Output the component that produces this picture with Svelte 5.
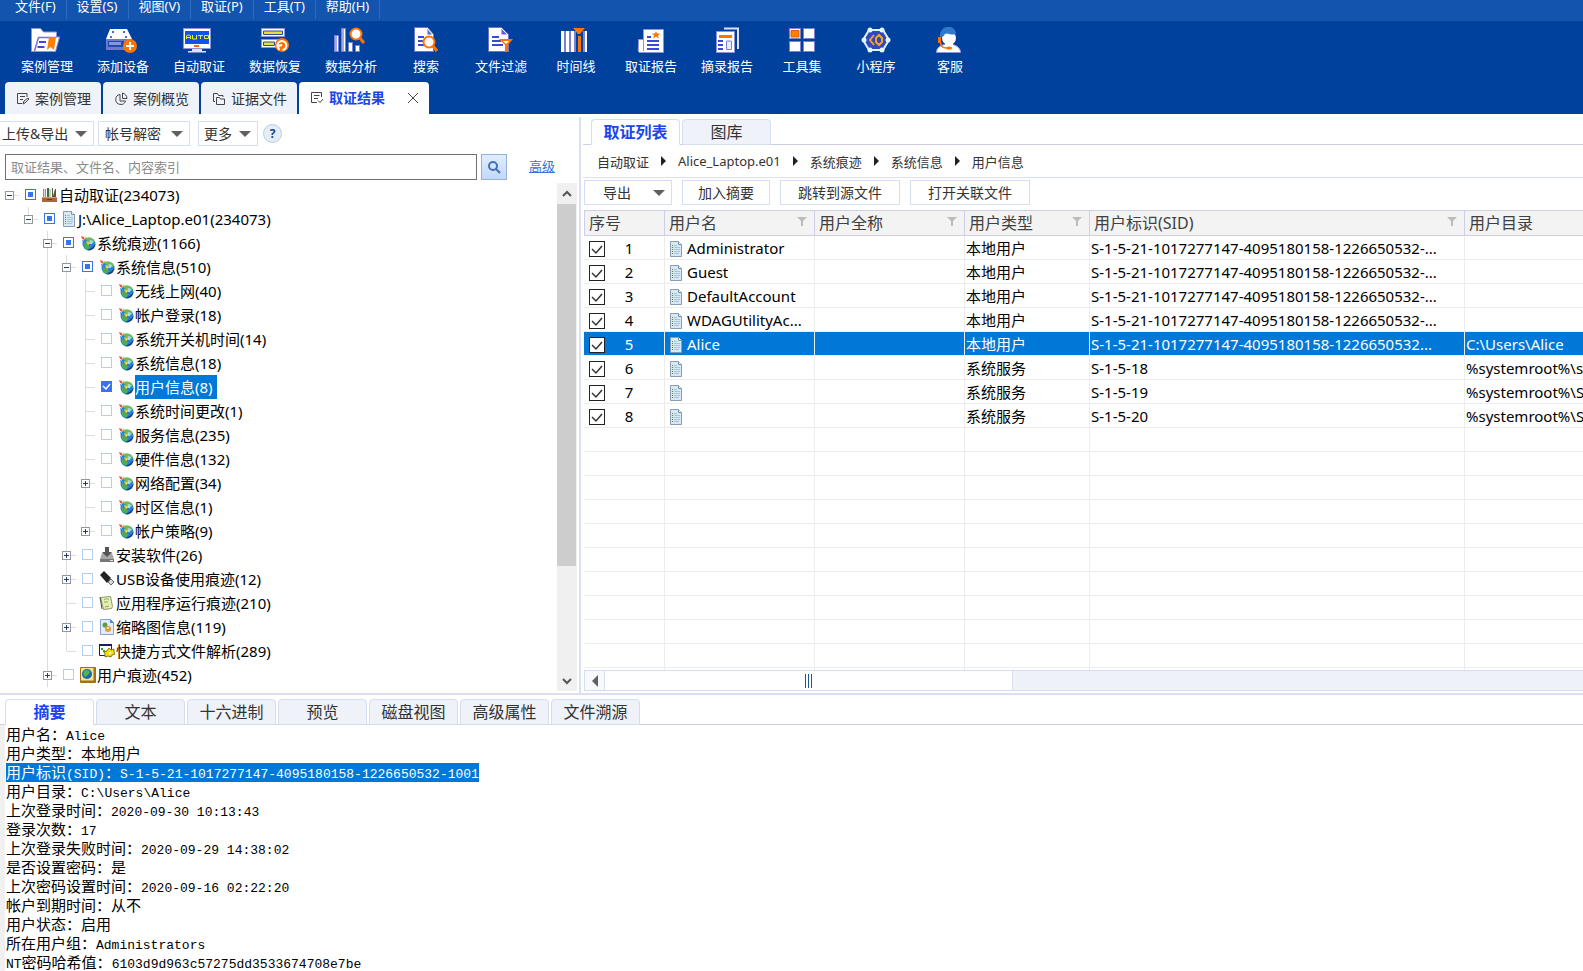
<script lang="ts">
  interface TreeNode {
    level: number;
    icon: string;
    name: string;
    count: number;
    expand?: '+' | '-';
    check?: 'partial' | 'on';
    // vertical guides: levels that carry on below this row
    lines: number[];
    last?: boolean;
  }

  const menus = ['文件(F)', '设置(S)', '视图(V)', '取证(P)', '工具(T)', '帮助(H)'];

  const tools = [
    { name: '案例管理', icon: 'caseFolder' },
    { name: '添加设备', icon: 'addDevice' },
    { name: '自动取证', icon: 'auto' },
    { name: '数据恢复', icon: 'recover' },
    { name: '数据分析', icon: 'analyse' },
    { name: '搜索', icon: 'search' },
    { name: '文件过滤', icon: 'filter' },
    { name: '时间线', icon: 'timeline' },
    { name: '取证报告', icon: 'report' },
    { name: '摘录报告', icon: 'excerpt' },
    { name: '工具集', icon: 'toolset' },
    { name: '小程序', icon: 'applet' },
    { name: '客服', icon: 'support' }
  ];

  const pages = [
    { name: '案例管理', icon: 'edit' },
    { name: '案例概览', icon: 'pie' },
    { name: '证据文件', icon: 'folders' },
    { name: '取证结果', icon: 'result' }
  ];

  const nodes: TreeNode[] = [
    { level: 0, icon: 'books', name: '自动取证', count: 234073, expand: '-', check: 'partial', lines: [] },
    { level: 1, icon: 'doc', name: 'J:\\Alice_Laptop.e01', count: 234073, expand: '-', check: 'partial', lines: [], last: true },
    { level: 2, icon: 'globe', name: '系统痕迹', count: 1166, expand: '-', check: 'partial', lines: [] },
    { level: 3, icon: 'globe', name: '系统信息', count: 510, expand: '-', check: 'partial', lines: [2] },
    { level: 4, icon: 'globe', name: '无线上网', count: 40, lines: [2, 3] },
    { level: 4, icon: 'globe', name: '帐户登录', count: 18, lines: [2, 3] },
    { level: 4, icon: 'globe', name: '系统开关机时间', count: 14, lines: [2, 3] },
    { level: 4, icon: 'globe', name: '系统信息', count: 18, lines: [2, 3] },
    { level: 4, icon: 'globe', name: '用户信息', count: 8, check: 'on', lines: [2, 3] },
    { level: 4, icon: 'globe', name: '系统时间更改', count: 1, lines: [2, 3] },
    { level: 4, icon: 'globe', name: '服务信息', count: 235, lines: [2, 3] },
    { level: 4, icon: 'globe', name: '硬件信息', count: 132, lines: [2, 3] },
    { level: 4, icon: 'globe', name: '网络配置', count: 34, expand: '+', lines: [2, 3] },
    { level: 4, icon: 'globe', name: '时区信息', count: 1, lines: [2, 3] },
    { level: 4, icon: 'globe', name: '帐户策略', count: 9, expand: '+', lines: [2, 3], last: true },
    { level: 3, icon: 'install', name: '安装软件', count: 26, expand: '+', lines: [2] },
    { level: 3, icon: 'usb', name: 'USB设备使用痕迹', count: 12, expand: '+', lines: [2] },
    { level: 3, icon: 'app', name: '应用程序运行痕迹', count: 210, lines: [2] },
    { level: 3, icon: 'thumb', name: '缩略图信息', count: 119, expand: '+', lines: [2] },
    { level: 3, icon: 'shortcut', name: '快捷方式文件解析', count: 289, lines: [2], last: true },
    { level: 2, icon: 'world', name: '用户痕迹', count: 452, expand: '+', lines: [] }
  ];

  const crumbs = ['自动取证', 'Alice_Laptop.e01', '系统痕迹', '系统信息', '用户信息'];
  const columns = ['用户名', '用户全称', '用户类型', '用户标识(SID)', '用户目录'];
  const SID = 'S-1-5-21-1017277147-4095180158-1226650532';

  const users = [
    { name: 'Administrator', type: '本地用户', sid: SID + '-...', dir: '' },
    { name: 'Guest', type: '本地用户', sid: SID + '-...', dir: '' },
    { name: 'DefaultAccount', type: '本地用户', sid: SID + '-...', dir: '' },
    { name: 'WDAGUtilityAc...', type: '本地用户', sid: SID + '-...', dir: '' },
    { name: 'Alice', type: '本地用户', sid: SID + '...', dir: 'C:\\Users\\Alice' },
    { name: '', type: '系统服务', sid: 'S-1-5-18', dir: '%systemroot%\\system32' },
    { name: '', type: '系统服务', sid: 'S-1-5-19', dir: '%systemroot%\\ServiceProfiles' },
    { name: '', type: '系统服务', sid: 'S-1-5-20', dir: '%systemroot%\\ServiceProfiles' }
  ];
  const emptyRows = Array(11);

  const detailTabs = ['摘要', '文本', '十六进制', '预览', '磁盘视图', '高级属性', '文件溯源'];
  const details = [
    '用户名：Alice',
    '用户类型：本地用户',
    '用户标识(SID)：S-1-5-21-1017277147-4095180158-1226650532-1001',
    '用户目录：C:\\Users\\Alice',
    '上次登录时间：2020-09-30 10:13:43',
    '登录次数：17',
    '上次登录失败时间：2020-09-29 14:38:02',
    '是否设置密码：是',
    '上次密码设置时间：2020-09-16 02:22:20',
    '帐户到期时间：从不',
    '用户状态：启用',
    '所在用户组：Administrators',
    'NT密码哈希值：6103d9d963c57275dd3533674708e7be'
  ];

  let activePage = $state('取证结果');
  let activeNode = $state(8);
  let activeUser = $state(4);
  let activeDetail = $state('摘要');
  let activeList = $state('取证列表');
  let query = $state('');

  // latin runs get the monospace face, the rest stays CJK
  function runs(text: string) {
    return text.split(/([\x20-\x7e]+)/).filter(Boolean);
  }

  const icons: Record<string, string> = {
    // --- toolbar, 34x26 ---
    caseFolder: `<path d="M1.500 24.500V1.500h9l3 3.500h13v5h3l-4 14.500z" fill="#fff" stroke="#8f94d8"/><path d="M4.500 24L8.500 10.500h18" fill="none" stroke="#6f76cf" stroke-width="1.500"/><path d="M9 15h7M7.500 20h7" stroke="#3b49d0" stroke-width="2"/><path d="M19 10h7l-2 13-3.500-3-3.500 3z" fill="#ff8000"/>`,
    addDevice: `<path d="M4 2h17l5 10H0z" fill="#fff"/><path d="M0 12h26v11H0z" fill="#6f79cb"/><path d="M2 14h16v6H2z" fill="#1c4cae"/><path d="M3 15h12v3H3z" fill="#8b93dc"/><path d="M6 4h2v2H6zM17 4h2v2h-2zM4 9h2v2H4zM19 9h2v2h-2z" fill="#5c65c8"/><circle cx="24" cy="19" r="7" fill="#ff7300"/><path d="M24 15v8M20 19h8" stroke="#fff" stroke-width="2"/>`,
    auto: `<path d="M1.500 1.500h27v20h-27z" fill="#fff" stroke="#8f94d8"/><path d="M3 4h24v13H3z" fill="#1351e8"/><path d="M4.500 12V9l1-1h2l1 1v3M4.500 10.500h4M10.500 8v4h4V8M16 8.500h5M18.500 8.500V12M22.500 8.500h4v3h-4z" fill="none" stroke="#e7ef2a"/><path d="M12 18h5v2h-5z" fill="#ff6a00"/><path d="M10 22h10v2h4v1.500H6V24h4z" fill="#dfe1fb"/>`,
    recover: `<path d="M3.500 1.500h23v8h-23zM3.500 12.500h23v8h-23z" fill="#fff" stroke="#8f94d8"/><path d="M5.500 4h19v3.500h-19zM5.500 15h11v3.500h-11z" fill="#e2e32e" stroke="#31499c"/><circle cx="24" cy="18" r="7" fill="#ff7300"/><path d="M20.500 21.500a4.500 4.500 0 1 1 4 1.500M24 18l-4 1 1 4" fill="none" stroke="#fff" stroke-width="2"/>`,
    analyse: `<g fill="#fff" stroke="#7b82d2"><path d="M.5 8.500h4v16h-4zM7.500 1.500h4v23h-4zM14.500 15.500h4v9h-4zM21.500 18.500h4v6h-4z"/></g><path d="M1 9h2v15H1zM8 2h2v22H8z" fill="#a5aae4"/><circle cx="22" cy="7" r="5.500" fill="#fff" stroke="#ff7300" stroke-width="2"/><path d="M26 11l4 5" stroke="#ff7300" stroke-width="3"/>`,
    search: `<path d="M5.500.5h13l6 7v17h-19z" fill="#fff" stroke="#6c73cc"/><path d="M18 1v7h6z" fill="#5d67cc" stroke="#fff"/><path d="M9 10h6M9 14h6M9 18h6" stroke="#3b49d0" stroke-width="2"/><circle cx="20" cy="15" r="5.500" fill="#fff" stroke="#ff7300" stroke-width="2"/><path d="M24 19l4 5" stroke="#ff7300" stroke-width="3"/>`,
    filter: `<path d="M4.500.5h13l7 7v17h-20z" fill="#fff" stroke="#6c73cc"/><path d="M17 1v7h7z" fill="#5d67cc" stroke="#fff"/><path d="M8 10h7M8 14h9M8 18h11" stroke="#3b49d0" stroke-width="2"/><path d="M15 12h14l-5 6v7h-3v-7z" fill="#ff7300"/><path d="M19 14h6l-3 3z" fill="#fff"/>`,
    timeline: `<path d="M2 4h26v21H2z" fill="#fff"/><path d="M5 4h2v21H5zM10 4h2v21h-2zM15 4h2v21h-2zM24 4h2v21h-2z" fill="#7b82d2"/><path d="M17 4h7v21h-7z" fill="#00419d"/><path d="M14 1h12l-5 6h-2z" fill="#ff7300"/><path d="M19 9h3v16h-3z" fill="#ff7300"/>`,
    report: `<path d="M9.500 2.500h20v23h-24c-2-1-1-2-1-13h5z" fill="#fff" stroke="#8f94d8"/><path d="M9.500 12v12" stroke="#8f94d8"/><path d="M22 4l1 2.500h3L24 8.500l1 3-3-2-3 2 1-3-2-2h3z" fill="#ff7300"/><path d="M13 10h4M13 14h12M13 18h12M13 22h12" stroke="#3b49d0" stroke-width="2"/>`,
    excerpt: `<path d="M14 1.500h14V22" fill="none" stroke="#dfe1fb" stroke-width="2"/><path d="M6.500 4.500h18v21h-18z" fill="#fff" stroke="#8f94d8"/><path d="M9 8h13v3H9z" fill="#ff7300"/><path d="M8 14h5M8 18h5M8 22h5" stroke="#3b49d0" stroke-width="2"/><path d="M16.500 14h5v8.500h-5z" fill="#e9ebfb" stroke="#7b82d2"/>`,
    toolset: `<path d="M4.500 1.500h11v10h-11zM18.500 1.500h11v10h-11zM4.500 14.500h11v10h-11zM18.500 14.500h11v10h-11z" fill="#fff" stroke="#7b82d2"/><path d="M6 3.500h8v6.500H6z" fill="#ff8000" stroke="#e05a00"/>`,
    applet: `<path d="M10 3h14l6 10-6 10H10L4 13z" fill="#3147c2" stroke="#dff4fa" stroke-width="2"/><g fill="#dff6fa"><circle cx="11" cy="3" r="2.500"/><circle cx="23" cy="3" r="2.500"/><circle cx="5" cy="13" r="2.500"/><circle cx="29" cy="13" r="2.500"/><circle cx="11" cy="23" r="2.500"/><circle cx="23" cy="23" r="2.500"/></g><path d="M15 8l-4 5 4 5M20 8l-3 3v4l3 3 3-3v-4z" fill="none" stroke="#f5a31a" stroke-width="2"/>`,
    support: `<path d="M3.500 25.500c0-5 4-7 8-8h8c5 1 8 4 8 8z" fill="#fff" stroke="#8f94d8"/><circle cx="16" cy="11" r="7" fill="#fff"/><path d="M12 16h8v4h-8z" fill="#fff"/><path d="M7 10C6-3 23-3 23 7c-6 2-8-2-11 0-1 1-1 3-5 3z" fill="#2f79cb"/><path d="M5 10h3v6H5z" fill="#ff7300"/><path d="M7.500 15c0 4 2 6 6 6" fill="none" stroke="#ff7300" stroke-width="1.500"/><ellipse cx="16" cy="21" rx="3" ry="1.500" fill="#ff7300"/>`,

    // --- page tabs, 14x14 ---
    edit: `<path d="M11 5V1.500H1.500v10H6M4 4.500h5M4 7.500h3M7 12l1-3 4-3 1 1-4 4z"/>`,
    pie: `<path d="M6 2.500a5 5 0 1 0 5.500 6.500H6zM8.500 1v5.500h4.500C13 4 11 1.500 8.500 1z"/>`,
    folders: `<path d="M3 9.500H1.500v-8h4l1 2H11V5M4.500 5.500h3l1 1.500h4v5.500h-8z"/>`,
    result: `<path d="M11.500 6V1.500h-10v10H7M4 4.500h5.500M4 7.500h4M8 9.500l2 2 3-3.500"/>`,

    // --- tree, 16x16 ---
    books: `<path d="M1 2h3v9H1z" fill="#8a9a6a"/><path d="M2 2h1v9H2z" fill="#dfe5c8"/><path d="M5 1h2v10H5z" fill="#3d6b4a"/><path d="M7 2h2v9H7z" fill="#c9d3b4"/><path d="M10 1l1 0 0 8 2-7h1v9h-4z" fill="#55554a"/><path d="M0 10h15v5H0z" fill="#a5683a"/><path d="M0 10h15v1H0z" fill="#d9a06c"/><path d="M5 12h5v1H5z" fill="#6e3c18"/>`,
    doc: `<path d="M2.500.5h8l3 3v12h-11z" fill="#d6e9f5" stroke="#8a9dae"/><path d="M10.500.5v3h3" fill="#fff" stroke="#7d93a6"/><path d="M6 4.500h3M6 6.500h6M6 8.500h6M6 10.500h6M6 12.500h5" stroke="#a8c4d8"/><path d="M4 4.500h1M4 8.500h1M4 12.500h1" stroke="#3d9a55"/><path d="M4 6.500h1M4 10.500h1" stroke="#b05048"/>`,
    globe: `<circle cx="9" cy="9" r="6.500" fill="#2a7fd6"/><path d="M8 3c3-1 6 1 7 4l-2 1-2-1-3 1z" fill="#6cc04a"/><path d="M4 8l4 1 2 3-2 3C5 14 3 11 4 8z" fill="#4fae46"/><path d="M10 5l3 1-1 3-3 0z" fill="#a6dcf7"/><path d="M7 15c4 1 8-1 8.500-6-2 3-5 5-8.500 6z" fill="#16427e"/><path d="M1 1l3 1 1 3-3-1z" fill="#ee5a30"/><path d="M5 2l3 1v3L6 5z" fill="#7bbb3a"/><path d="M2 5l3 1 1 3-3-1z" fill="#3a86d8"/><path d="M6 6l3 1v3L7 9z" fill="#f3cc3c"/>`,
    install: `<path d="M3 6h10l2 6v3H1v-3z" fill="#a8a8a8"/><path d="M1 12h14v3H1z" fill="#777"/><path d="M6 0h4v5h3l-5 5-5-5h3z" fill="#555"/><path d="M11 13h3v1h-3z" fill="#e8e8e8"/>`,
    usb: `<path d="M1 4l4-4 7 7-4 5z" fill="#222"/><path d="M9 11l3-3 3 3-3 3z" fill="#d8d8d8" stroke="#666"/>`,
    app: `<path d="M1.500 2.500l10-1 2 10-1 2-8 1z" fill="#e6edbb" stroke="#8c9a60"/><path d="M5 5c2-2 4-1 5 0M5 7h4M6 12l4-1" fill="none" stroke="#7cae4a"/><path d="M1 2l2 12" stroke="#4c5238"/>`,
    thumb: `<path d="M1.500.5h10l3 3v12h-13z" fill="#e2ecfb" stroke="#8aa1cf"/><path d="M11 0v4h4z" fill="#4a8ae0"/><circle cx="6" cy="6" r="2.500" fill="#57a03c"/><circle cx="9" cy="10" r="3" fill="#e79a34"/><circle cx="9" cy="9" r="1" fill="#fff"/>`,
    shortcut: `<path d="M.5 1.500h12v11H.5z" fill="#fff" stroke="#1c1c60"/><path d="M0 1h13v2H0z" fill="#1c1c60"/><path d="M3 5v2M6 8H4" stroke="#2aa52a" stroke-width="2"/><path d="M10 5l2 2 3-1v3l1 2-3 1-1 2-3-1-3 1v-3l-1-2 3-1z" fill="#f2df18" stroke="#8a7a00"/><circle cx="11" cy="10" r="1" fill="#fff"/>`,
    world: `<path d="M.5.5h15v15H.5z" fill="#f4e29c" stroke="#a0701c"/><path d="M14.500 1v13.500H1" fill="none" stroke="#a0701c" stroke-width="2"/><circle cx="7" cy="7" r="5" fill="#1c66ac"/><path d="M4 4c3-2 5-1 6 1L8 8l-3 2C3 8 3 6 4 4z" fill="#52b552"/>`
  };
</script>

{#snippet treeIcon(name: string)}
  <svg class="icon16" viewBox="0 0 16 16" aria-hidden="true">{@html icons[name]}</svg>
{/snippet}

<div class="window">
  <header>
    <nav class="menubar">
      {#each menus as menu}
        <button>{menu}</button>
      {/each}
    </nav>

    <div class="toolbar">
      {#each tools as tool}
        <button class:wide={tool.name.length > 3}>
          <svg viewBox="0 0 34 26" aria-hidden="true">{@html icons[tool.icon]}</svg>
          <span>{tool.name}</span>
        </button>
      {/each}
    </div>

    <div class="pages" role="tablist">
      {#each pages as page}
        <div class="page" class:active={activePage === page.name}>
          <button role="tab" aria-selected={activePage === page.name} onclick={() => (activePage = page.name)}>
            <svg viewBox="0 0 14 14" aria-hidden="true">{@html icons[page.icon]}</svg>
            {page.name}
          </button>
          {#if activePage === page.name}
            <button class="close" aria-label="关闭">
              <svg viewBox="0 0 12 12" aria-hidden="true"><path d="M1 1l10 10M11 1L1 11" /></svg>
            </button>
          {/if}
        </div>
      {/each}
    </div>
  </header>

  <main>
    <aside>
      <div class="actions">
        <button class="box first">上传&amp;导出<i class="caret"></i></button>
        <button class="box second">帐号解密<i class="caret"></i></button>
        <button class="box third">更多<i class="caret"></i></button>
        <button class="help">?</button>
      </div>

      <form class="search" onsubmit={(e) => e.preventDefault()}>
        <input type="text" aria-label="搜索" placeholder="取证结果、文件名、内容索引" bind:value={query} />
        <button aria-label="搜索">
          <svg viewBox="0 0 14 14" aria-hidden="true"><circle cx="6" cy="6" r="4" /><path d="M9 9l4 4" /></svg>
        </button>
        <a href="#advanced">高级</a>
      </form>

      <div class="tree-wrap">
        <ul class="tree">
          {#each nodes as node, i}
            <li>
              {#each Array(node.level) as _, l}
                <span class="guide" class:line={node.lines.includes(l)}></span>
              {/each}
              <span class="guide stub" class:line={node.level > 1 && !node.last} class:half={node.last}>
                {#if node.expand}
                  <button class="expander" class:plus={node.expand === '+'} aria-label={node.name}></button>
                {/if}
              </span>
              <input
                type="checkbox"
                id="node-{i}"
                class:partial={node.check === 'partial'}
                checked={node.check === 'on'}
              />
              {@render treeIcon(node.icon)}
              <label for="node-{i}" class:selected={activeNode === i}>{node.name}({node.count})</label>
            </li>
          {/each}
        </ul>
        <div class="vscroll">
          <button aria-label="向上"><svg viewBox="0 0 10 10" aria-hidden="true"><path d="M1 7l4-4 4 4" /></svg></button>
          <div class="thumb"></div>
          <button aria-label="向下"><svg viewBox="0 0 10 10" aria-hidden="true"><path d="M1 3l4 4 4-4" /></svg></button>
        </div>
      </div>
    </aside>

    <section class="list">
      <div class="tabs" role="tablist">
        {#each ['取证列表', '图库'] as tab}
          <button role="tab" aria-selected={activeList === tab} class:active={activeList === tab} onclick={() => (activeList = tab)}>{tab}</button>
        {/each}
      </div>

      <nav class="crumbs">
        {#each crumbs as crumb, i}
          {#if i > 0}<i></i>{/if}
          <a href="#crumb-{i}">{crumb}</a>
        {/each}
      </nav>

      <div class="list-actions">
        <button class="box short export">导出<i class="caret"></i></button>
        <button class="box short">加入摘要</button>
        <button class="box">跳转到源文件</button>
        <button class="box">打开关联文件</button>
      </div>

      <div class="grid">
        <table>
          <colgroup>
            <col class="c-no" /><col class="c-name" /><col class="c-name" /><col class="c-type" /><col class="c-sid" /><col />
          </colgroup>
          <thead>
            <tr>
              <th>序号</th>
              {#each columns as column, i}
                <th>
                  <div class="head">
                    {column}
                    {#if i < 4}
                      <svg viewBox="0 0 10 10" aria-hidden="true"><path d="M0 0h10L6 4v5H4V4z" /></svg>
                    {/if}
                  </div>
                </th>
              {/each}
            </tr>
          </thead>
          <tbody>
            {#each users as user, i}
              <tr class:selected={activeUser === i} onclick={() => (activeUser = i)}>
                <td>
                  <label class="pick"><input type="checkbox" checked /><span>{i + 1}</span></label>
                </td>
                <td>
                  <div class="name">{@render treeIcon('doc')}<span>{user.name}</span></div>
                </td>
                <td></td>
                <td>{user.type}</td>
                <td>{user.sid}</td>
                <td class="dir">{user.dir}</td>
              </tr>
            {/each}
            {#each emptyRows as _}
              <tr><td></td><td></td><td></td><td></td><td></td><td></td></tr>
            {/each}
          </tbody>
        </table>
      </div>

      <div class="hscroll">
        <button aria-label="向左"></button>
        <div class="thumb"><i></i></div>
      </div>
    </section>
  </main>

  <section class="detail">
    <div class="tabs" role="tablist">
      {#each detailTabs as tab}
        <button role="tab" aria-selected={activeDetail === tab} class:active={activeDetail === tab} onclick={() => (activeDetail = tab)}>{tab}</button>
      {/each}
    </div>
    <div class="summary">
      {#each details as line, i}
        <p><span class:marked={i === 2}>{#each runs(line) as run}{#if /[\x20-\x7e]/.test(run)}<code>{run}</code>{:else}{run}{/if}{/each}</span></p>
      {/each}
    </div>
  </section>
</div>

<style>
  :global(body) { background: #fff; }

  .window {
    display: flex; flex-direction: column; height: 100vh; overflow: hidden;
    font-family: "Noto Sans", "Noto Sans CJK SC", sans-serif; font-size: 14px; color: #222;
  }
  button { font: inherit; color: inherit; border: none; background: none; padding: 0; margin: 0; cursor: pointer; white-space: nowrap; }
  svg { display: block; flex-shrink: 0; }

  header { flex-shrink: 0; background: #00419d; color: #fff; }

  .menubar { display: flex; align-items: flex-start; height: 21px; padding-left: 5px; background: #1254ae; font-size: 13px; }
  .menubar button { height: 19px; padding: 0 10px 6px; line-height: 13px; border-right: 1px solid #2c6bc2; }

  .toolbar { display: flex; height: 61px; padding-left: 9px; font-size: 13px; }
  .toolbar button { display: flex; flex-direction: column; align-items: center; width: 74px; padding-top: 6px; }
  .toolbar .wide { width: 76px; }
  .toolbar svg { width: 34px; height: 26px; }
  .toolbar span { margin-top: 4px; line-height: 18px; }

  .pages { display: flex; gap: 2px; height: 32px; padding-left: 5px; }
  .page { display: flex; align-items: center; width: 96px; background: #eff2f8; border-radius: 4px 4px 0 0; color: #333; }
  .page button { display: flex; align-items: center; gap: 5px; height: 32px; padding-top: 2px; padding-left: 11px; box-sizing: border-box; line-height: 20px; }
  .page svg { width: 14px; height: 14px; fill: none; stroke: #444; }
  .page.active { width: 130px; background: #fff; color: #1a46ea; font-weight: bold; }
  .page.active button { padding-top: 0; }
  .page .close { padding-left: 22px; }
  .page .close svg { width: 12px; height: 12px; }

  main { display: flex; flex-shrink: 0; border-bottom: 2px solid #d8e0f2; }

  aside { display: flex; flex-direction: column; width: 579px; flex-shrink: 0; }
  .box {
    display: flex; align-items: center; justify-content: center; box-sizing: border-box;
    height: 25px; border: 1px solid #d5dfef; background: #fff; line-height: 20px; color: #333;
  }
  .caret { border: 6px solid transparent; border-top-color: #606060; border-bottom: none; }

  .actions { display: flex; gap: 4px; padding-top: 7px; align-items: center; }
  .actions .box { justify-content: space-between; padding: 0 6px; }
  .actions .first { width: 94px; padding-left: 2px; border-left: none; }
  .actions .second { width: 92px; }
  .actions .third { width: 60px; margin-left: 4px; padding-left: 5px; }
  .help {
    width: 19px; height: 19px; margin-left: 1px; border: 1px solid #b9cde3; border-radius: 50%;
    background: #e6ecf3; color: #14448f; font-size: 12px; font-weight: bold; line-height: 17px; text-align: center;
  }

  .search { display: flex; align-items: center; padding: 8px 0 3px 5px; }
  .search input {
    width: 472px; height: 26px; box-sizing: border-box; padding: 0 5px; border: 1px solid #707070; border-radius: 0;
    font: inherit; font-size: 13px; outline: none;
  }
  .search input::placeholder { color: #8a8a8a; opacity: 1; }
  .search button {
    display: flex; align-items: center; justify-content: center; width: 26px; height: 26px; margin-left: 4px; box-sizing: border-box;
    border: 1px solid #93b2d8; background: linear-gradient(#e2edfd, #c0d8fb);
  }
  .search svg { width: 14px; height: 14px; fill: none; stroke: #4571b0; stroke-width: 2; }
  .search a { margin-left: 22px; padding-bottom: 3px; font-size: 13px; line-height: 20px; color: #3a6fd8; }

  .tree-wrap { display: flex; justify-content: space-between; height: 508px; overflow: hidden; padding-right: 2px; margin-bottom: 2px; }
  .tree { list-style: none; margin: 0; padding: 0; font-size: 15px; line-height: 24px; color: #000; }
  .tree li { display: flex; align-items: center; height: 24px; }
  .tree input {
    appearance: none; width: 11px; height: 11px; margin: 0 6px 2px 6px; box-sizing: border-box;
    border: 1px solid #b5ccf8; background: #fff; flex-shrink: 0;
  }
  .tree .partial { border-color: #3a73f0; background: linear-gradient(#3a73f0, #3a73f0) center / 5px 5px no-repeat #fff; }
  .tree input:checked {
    border-color: #3a73f0;
    background: #3a73f0 url("data:image/svg+xml,%3Csvg xmlns='http://www.w3.org/2000/svg' viewBox='0 0 9 9'%3E%3Cpath d='M1 4l3 3 4-5' fill='none' stroke='white' stroke-width='1.500'/%3E%3C/svg%3E");
  }
  .tree label { margin-left: 1px; white-space: nowrap; }
  .tree label.selected { background: #0078d7; color: #fff; padding-right: 4px; }
  .icon16 { width: 16px; height: 16px; }

  .guide {
    display: flex; align-items: center; justify-content: center; width: 19px; height: 24px; flex-shrink: 0;
    background-repeat: no-repeat; background-position: 9px 0, 10px 12px; background-size: 0 0, 0 0;
    background-image: linear-gradient(#dcdcdc, #dcdcdc), linear-gradient(#dcdcdc, #dcdcdc);
  }
  .guide.line { background-size: 1px 24px, 0 0; }
  .guide.stub { background-size: 0 0, 9px 1px; }
  .guide.stub.line { background-size: 1px 24px, 9px 1px; }
  .guide.stub.half { background-size: 1px 12px, 9px 1px; }
  .expander {
    width: 9px; height: 9px; border: 1px solid #969696;
    background: linear-gradient(#1c3f7c, #1c3f7c) center / 5px 1px no-repeat #fff;
  }
  .expander.plus {
    background: linear-gradient(#1c3f7c, #1c3f7c) center / 5px 1px no-repeat,
      linear-gradient(#1c3f7c, #1c3f7c) center / 1px 5px no-repeat #fff;
  }

  .vscroll { display: flex; flex-direction: column; width: 20px; background: #f0f0f0; }
  .vscroll button { display: flex; align-items: center; justify-content: center; height: 21px; }
  .vscroll svg { width: 10px; height: 10px; fill: none; stroke: #555; stroke-width: 2; }
  .vscroll .thumb { width: 19px; height: 362px; margin-bottom: auto; background: #cdcdcd; }

  .tabs { display: flex; gap: 2px; height: 26px; box-sizing: border-box; border-bottom: 1px solid #cdcfe2; font-size: 16px; }
  .tabs button {
    width: 89px; height: 26px; box-sizing: border-box; border: 1px solid #d3deef; border-radius: 4px 4px 0 0;
    background: #eff2f8; color: #333; line-height: 22px;
  }
  .tabs .active { background: #fff; border-bottom-color: #fff; color: #1a46ea; font-weight: bold; }

  .list { display: flex; flex-direction: column; flex: 1; min-width: 0; margin-top: 3px; padding: 2px 0 2px 2px; border-left: 2px solid #d8e0f2; }
  .list .tabs { padding-left: 8px; }
  .crumbs { display: flex; align-items: center; gap: 12px; height: 32px; padding-left: 14px; border-bottom: 1px solid #d8e0f2; font-size: 13px; }
  .crumbs a { color: #333; text-decoration: none; }
  .crumbs i { border: 5px solid transparent; border-left-color: #222; border-right: none; }
  .list-actions { display: flex; gap: 10px; padding: 2px 0 5px 1px; }
  .list-actions .box { width: 120px; }
  .list-actions .short { width: 88px; }
  .list-actions .export { justify-content: space-between; padding: 0 6px 0 18px; }

  .grid { flex: 1 1 0; min-height: 0; overflow: hidden; padding-left: 1px; }
  table { width: 100%; table-layout: fixed; border-collapse: separate; border-spacing: 0; font-size: 15px; color: #000; }
  .c-no { width: 81px; }
  .c-name { width: 150px; }
  .c-type { width: 125px; }
  .c-sid { width: 375px; }
  th {
    height: 24px; padding: 0 5px 0 4px; background: #f3f3f3; border: 1px solid #cdcfe2; border-left: none;
    font-size: 16px; font-weight: normal; line-height: 22px; text-align: left; color: #404040;
  }
  th:first-child { border-left: 1px solid #cdcfe2; }
  .head { display: flex; justify-content: space-between; padding-right: 2px; }
  .head svg { width: 10px; height: 10px; margin-top: 5px; fill: #bcbcbc; }
  td {
    height: 21px; padding: 2px 1px 0 1px; border-right: 1px solid #ededed; border-bottom: 1px solid #ededed;
    line-height: 21px; white-space: nowrap; overflow: hidden; text-overflow: ellipsis;
  }
  th:last-child, td:last-child { border-right: none; }
  .dir { text-overflow: clip; }
  tr.selected td { background: #0078d7; color: #fff; }
  .pick { display: flex; align-items: center; padding-left: 4px; }
  .pick span { width: 48px; text-align: center; }
  .pick input {
    appearance: none; width: 16px; height: 16px; margin: 0; box-sizing: border-box; border: 1px solid #222;
    background: #fff;
  }
  .pick input:checked {
    background: #fff url("data:image/svg+xml,%3Csvg xmlns='http://www.w3.org/2000/svg' viewBox='0 0 14 14'%3E%3Cpath d='M2 7l4 4 6-7' fill='none' stroke='%23333' stroke-width='1.500'/%3E%3C/svg%3E");
  }
  .name { display: flex; align-items: center; gap: 3px; padding-left: 2px; }

  .hscroll { display: flex; height: 21px; margin-left: 1px; box-sizing: border-box; border: 1px solid #d5dfef; border-right: none; background: #eef1f7; }
  .hscroll button { display: flex; align-items: center; justify-content: center; width: 20px; background: #f7f9fc; border-right: 1px solid #d5dfef; }
  .hscroll button::before { content: ""; border: 6px solid transparent; border-right-color: #606060; border-left: none; }
  .hscroll .thumb { display: flex; align-items: center; justify-content: center; width: 407px; background: #fff; border-right: 1px solid #d5dfef; }
  .hscroll .thumb i { width: 1px; height: 14px; border: 1px solid #1e559f; border-width: 0 1px; padding: 0 2px; background: linear-gradient(#1e559f, #1e559f) center / 1px 14px no-repeat; }

  .detail { display: flex; flex-direction: column; flex: 1; min-height: 0; padding-top: 4px; }
  .detail .tabs { padding-left: 5px; flex-shrink: 0; }
  .summary {
    flex: 1; min-height: 0; overflow: hidden; border-left: 5px solid #f0f0f0; padding-left: 1px;
    font-family: "Noto Sans CJK SC", sans-serif; font-size: 15px; color: #000;
  }
  .summary p { height: 19px; margin: 0; line-height: 17px; white-space: pre; }
  .summary span { display: inline-block; height: 19px; }
  .summary code { font-family: "Liberation Mono", monospace; font-size: 13px; }
  .summary .marked { background: #0078d7; color: #fff; }
</style>
